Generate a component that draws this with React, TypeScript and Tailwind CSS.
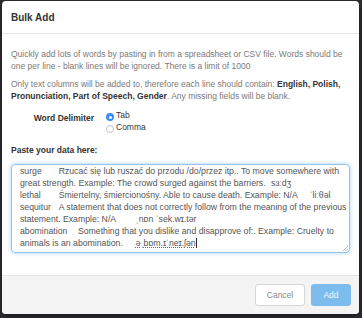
import React from "react";

const font = { fontFamily: '"Liberation Sans", Arial, sans-serif' };

function Radio({ checked }: { checked: boolean }) {
  return checked ? (
    <span className="inline-flex items-center justify-center w-[8px] h-[8px] rounded-full bg-[#3b8ef3] translate-y-[2px]">
      <span className="w-[3px] h-[3px] rounded-full bg-white" />
    </span>
  ) : (
    <span className="inline-block w-[8px] h-[8px] rounded-full border border-[#c4c4c4] bg-white translate-y-[2px]" />
  );
}

export default function App() {
  return (
    <div className="w-[362px] h-[318px] bg-[#2e2e34] overflow-hidden pt-[1px]" style={font}>
      <div className="ml-[2px] w-[357px] h-[313px] bg-white rounded-[4px] flex flex-col overflow-hidden shadow-[0_2px_6px_rgba(0,0,0,0.5)]">
        {/* header */}
        <div className="h-[33px] px-[9px] flex items-center border-b border-[#e6e6e6] shrink-0">
          <span className="text-[10px] font-bold text-[#333]">Bulk Add</span>
        </div>
        {/* body */}
        <div className="flex-1 px-[9px] pt-[14px] text-[8.5px] leading-[12px] text-[#7a7a7a]">
          <p>
            Quickly add lots of words by pasting in from a spreadsheet or CSV file. Words should be
            one per line - blank lines will be ignored. There is a limit of 1000
          </p>
          <p className="mt-[6px]">
            Only text columns will be added to, therefore each line should contain:{" "}
            <b className="text-[#333]">English, Polish, Pronunciation, Part of Speech, Gender</b>. Any
            missing fields will be blank.
          </p>
          <div className="flex mt-[7px]">
            <div className="w-[83px] text-right font-bold text-[#333] pt-[3px]">Word Delimiter</div>
            <div className="ml-[12px] flex flex-col text-[#333]">
              <div className="flex items-center h-[12px]">
                <Radio checked />
                <span className="ml-[2px]">Tab</span>
              </div>
              <div className="flex items-center h-[12px]">
                <Radio checked={false} />
                <span className="ml-[2px]">Comma</span>
              </div>
            </div>
          </div>
          <div className="mt-[11px] font-bold text-[#333]">Paste your data here:</div>
          <div className="relative mt-[8px] h-[89px] rounded-[4px] border border-[#93c2ec] shadow-[0_0_4px_rgba(102,175,233,0.55)] pl-[8px] text-[8.7px] text-[#555] whitespace-pre overflow-hidden [tab-size:8]">
            <div>{"surge\tRzucać się lub ruszać do przodu /do/przez itp.. To move somewhere with"}</div>
            <div>{"great strength. Example: The crowd surged against the barriers.\tsɜːdʒ"}</div>
            <div>{"lethal\tŚmiertelny, śmiercionośny. Able to cause death. Example: N/A\tˈliːθəl"}</div>
            <div>{"sequitur\tA statement that does not correctly follow from the meaning of the previous"}</div>
            <div>{"statement. Example: N/A\tˌnɒn ˈsek.wɪ.tər"}</div>
            <div>{"abomination\tSomething that you dislike and disapprove of:. Example: Cruelty to"}</div>
            <div>
              {"animals is an abomination.\t"}
              <span className="underline decoration-dotted decoration-[#e03030]">əˌbɒm.ɪˈneɪ.ʃən</span>
              <span className="inline-block w-px h-[10px] bg-[#333] align-[-2px]" />
            </div>
            <svg className="absolute right-[1px] bottom-[1px]" width="6" height="6" viewBox="0 0 6 6">
              <path d="M6 1 L1 6 M6 3.5 L3.5 6" stroke="#999" strokeWidth="0.7" />
            </svg>
          </div>
        </div>
        {/* footer */}
        <div className="h-[39px] shrink-0 border-t border-[#e6e6e6] bg-[#f4f4f4] flex items-start justify-end gap-[6px] pt-[8px] pr-[8px]">
          <button className="w-[50px] h-[22px] rounded-[3px] border border-[#d6d6d6] bg-white text-[8.5px] text-[#8a8a8a]">
            Cancel
          </button>
          <button className="w-[40px] h-[22px] rounded-[3px] bg-[#7dbdee] text-[8.5px] text-[#eef6fd]">
            Add
          </button>
        </div>
      </div>
    </div>
  );
}
